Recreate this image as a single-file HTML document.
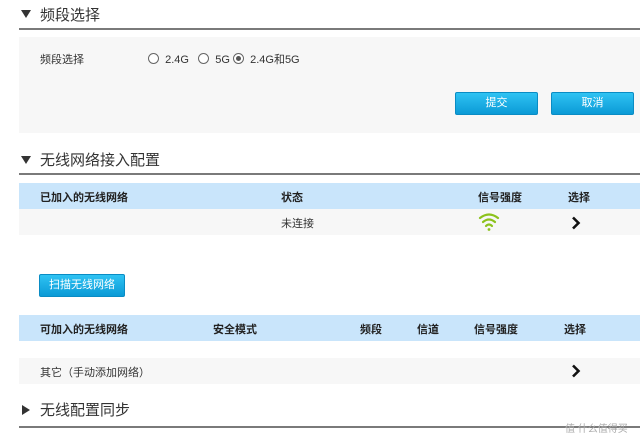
<!DOCTYPE html><html><head><meta charset="utf-8"><style>
body{margin:0;width:640px;height:437px;background:#fff;font-family:"Liberation Sans","Noto Sans CJK SC",sans-serif;position:relative;overflow:hidden;color:#333}
.a{position:absolute;white-space:nowrap}
.h{font-size:15px;color:#333}
.line{position:absolute;left:19px;right:0;height:2px;background:#7a7a7a}
.s{font-size:11px}
.b{font-size:11px;font-weight:bold;color:#222}
.btn{position:absolute;background:linear-gradient(#2fc3f3,#0b9ad6);border:1px solid #0a8cc4;border-radius:2px;color:#fff;font-size:11px;text-align:center;box-sizing:border-box}
.rad{display:inline-block;width:9px;height:9px;border:1px solid #666;border-radius:50%;vertical-align:-1px;position:relative;background:#fff}
</style></head><body>
<svg class="a" style="left:21px;top:10px" width="10" height="8"><path d="M0 0H10L5 8Z" fill="#333"/></svg><div class="a h" style="left:40px;top:4px">频段选择</div>
<div class="line" style="top:28px"></div>
<div class="a" style="left:19px;top:37px;right:0;height:96px;background:#f7f7f7"></div>
<div class="a s" style="left:40px;top:51px">频段选择</div>
<div class="a s" style="left:148px;top:51px"><span class="rad"></span>&nbsp; 2.4G&nbsp;&nbsp; <span class="rad"></span>&nbsp; 5G <span class="rad"><span style="position:absolute;left:2px;top:2px;width:5px;height:5px;border-radius:50%;background:#555"></span></span>&nbsp; 2.4G和5G</div>
<div class="btn" style="left:455px;top:92px;width:83px;height:23px;line-height:21px">提交</div>
<div class="btn" style="left:551px;top:92px;width:83px;height:23px;line-height:21px">取消</div>
<svg class="a" style="left:21px;top:156px" width="10" height="8"><path d="M0 0H10L5 8Z" fill="#333"/></svg><div class="a h" style="left:40px;top:149px">无线网络接入配置</div>
<div class="line" style="top:173px"></div>
<div class="a" style="left:19px;top:183px;right:0;height:26px;background:#c9e5fb"></div>
<div class="a b" style="left:40px;top:189px">已加入的无线网络</div>
<div class="a b" style="left:281px;top:189px">状态</div>
<div class="a b" style="left:478px;top:189px">信号强度</div>
<div class="a b" style="left:568px;top:189px">选择</div>
<div class="a" style="left:19px;top:209px;right:0;height:26px;background:#f7f7f7"></div>
<div class="a s" style="left:281px;top:215px">未连接</div>
<svg class="a" style="left:478px;top:212px" width="22" height="19" viewBox="0 0 22 19"><g fill="none" stroke="#8cc21c" stroke-width="2.2" stroke-linecap="round"><path d="M2 6Q11-1 20 6"/><path d="M5 10Q11 5 17 10"/><path d="M8 14Q11 11 14 14"/></g><circle cx="11" cy="17.5" r="1.4" fill="#8cc21c"/></svg>
<svg class="a" style="left:571px;top:216px" width="10" height="14"><path d="M2 1.5L7.5 7 2 12.5" fill="none" stroke="#111" stroke-width="2.6"/></svg>
<div class="btn" style="left:39px;top:274px;width:86px;height:23px;line-height:21px">扫描无线网络</div>
<div class="a" style="left:19px;top:315px;right:0;height:26px;background:#c9e5fb"></div>
<div class="a b" style="left:40px;top:321px">可加入的无线网络</div>
<div class="a b" style="left:213px;top:321px">安全模式</div>
<div class="a b" style="left:360px;top:321px">频段</div>
<div class="a b" style="left:417px;top:321px">信道</div>
<div class="a b" style="left:474px;top:321px">信号强度</div>
<div class="a b" style="left:564px;top:321px">选择</div>
<div class="a" style="left:19px;top:358px;right:0;height:26px;background:#f7f7f7"></div>
<div class="a s" style="left:40px;top:364px">其它（手动添加网络）</div>
<svg class="a" style="left:571px;top:364px" width="10" height="14"><path d="M2 1.5L7.5 7 2 12.5" fill="none" stroke="#111" stroke-width="2.6"/></svg>
<svg class="a" style="left:22px;top:405px" width="8" height="10"><path d="M0 0V10L8 5Z" fill="#333"/></svg><div class="a h" style="left:40px;top:399px">无线配置同步</div>
<div class="line" style="top:426px"></div>
<div class="a" style="left:565px;top:420px;font-size:10px;color:#aaa">值 什么值得买</div>
</body></html>
